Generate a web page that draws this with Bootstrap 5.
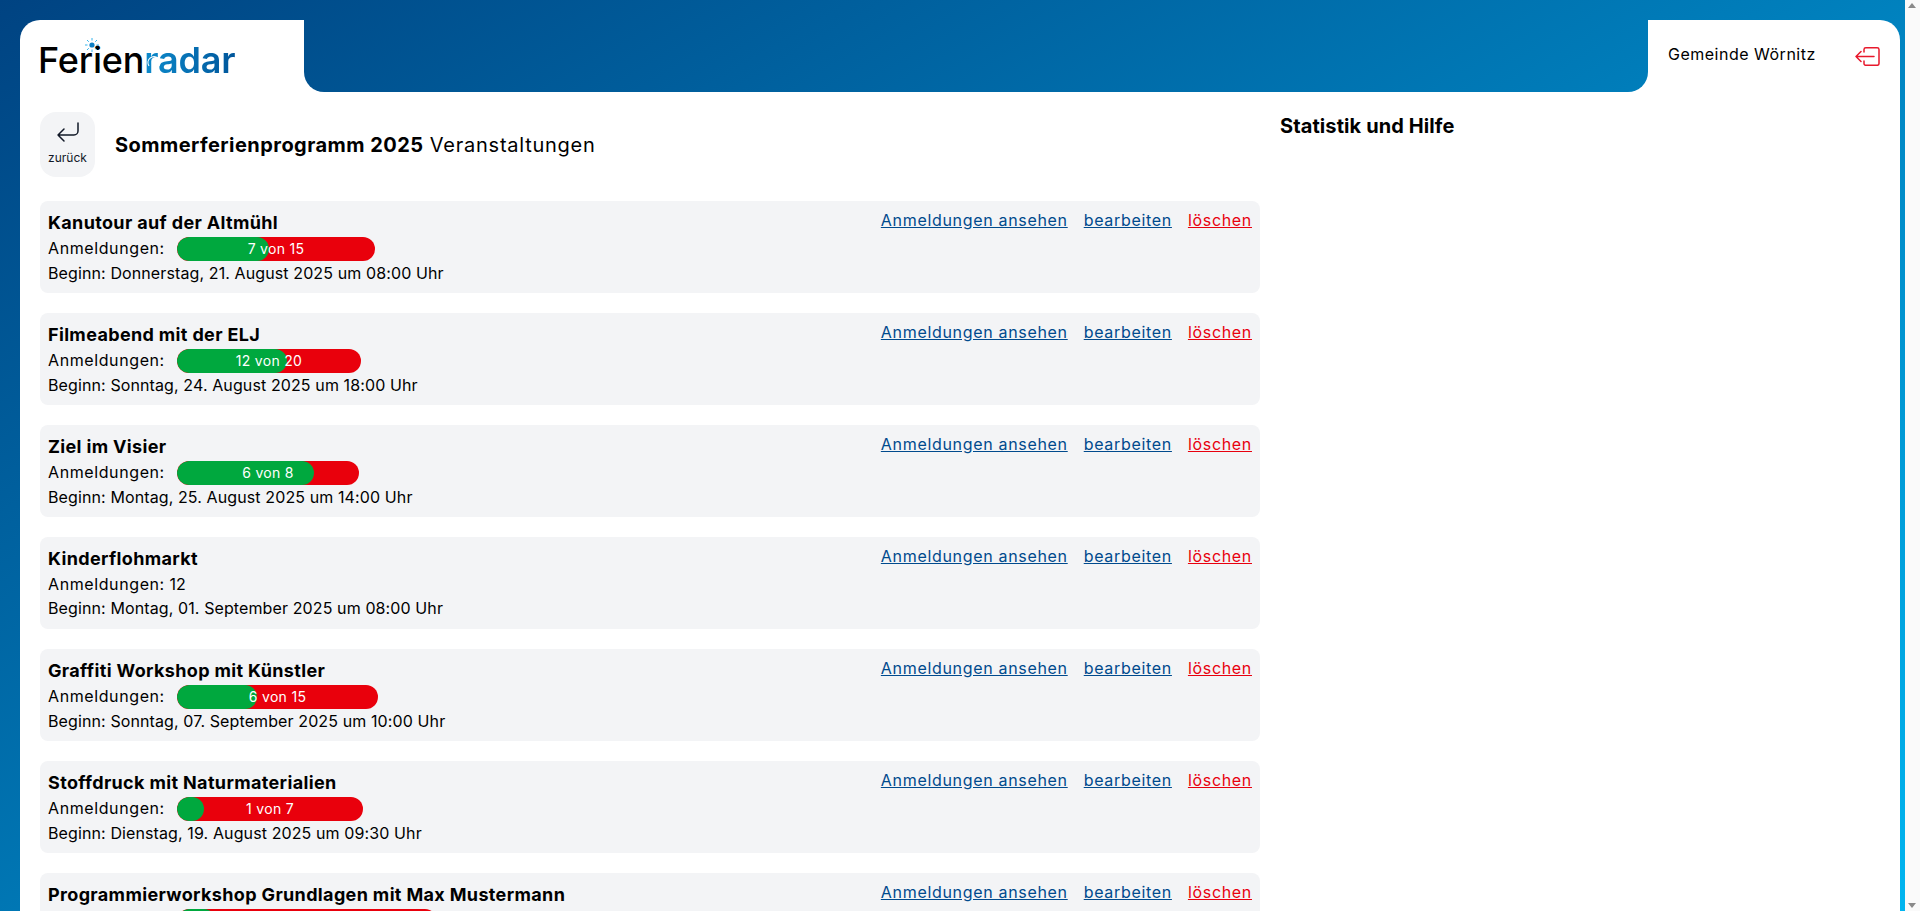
<!DOCTYPE html>
<html lang="de">
<head>
<meta charset="utf-8">
<title>Ferienradar</title>
<link href="https://cdn.jsdelivr.net/npm/bootstrap@5.3.0/dist/css/bootstrap.min.css" rel="stylesheet">
<style>
body{font-family:Inter,"Noto Sans",sans-serif;font-size:16px;color:#000;background:linear-gradient(150deg,#004382 0%,#00b5f0 100%) fixed;padding:20px 20px 20px 20px}
.fr-panel{background:#fff;border-radius:20px;min-height:1100px}
.fr-tab-left{width:284px;height:72px;padding:22px 0 0 18px}
.fr-tab-right{width:252px;height:72px;padding:0 20px}
.fr-strip{height:72px;background:linear-gradient(150deg,#004382 0%,#00b5f0 100%) fixed;border-radius:0 0 20px 20px}
.fr-logo{font-size:36px;font-weight:500;line-height:1;letter-spacing:-.005em;width:max-content}
.fr-radar{background:linear-gradient(90deg,#0d8bcc,#00569b);-webkit-background-clip:text;background-clip:text;color:transparent;font-weight:600}
.fr-sun{position:absolute;left:47px;top:-4px;width:14px;height:14px}
.fr-dial{position:absolute;left:108px;top:13px;width:16px;height:16px}
.fr-name{font-size:16px;letter-spacing:.5px;line-height:18px;margin-top:25px}
.fr-exit{margin-top:27px;line-height:0}
.fr-main{padding:20px 20px 20px}
.fr-main .row{--bs-gutter-x:20px}
.fr-back{width:55px;height:65px;background:#f3f4f6;border-radius:16px;color:#111827;font-size:12px;text-decoration:none;padding-top:8px}
.fr-back span{margin-top:5px}
.fr-head{font-size:20px;margin:0 0 0 20px;font-weight:400;letter-spacing:.75px}
.fr-head b{font-weight:700;letter-spacing:.45px}
.fr-side{font-size:20px;font-weight:700;margin:0;padding-top:1px;line-height:27px;letter-spacing:.1px}
.fr-top{margin-bottom:24px}
.fr-item{background:#f3f4f6;border-radius:8px;padding:8px;margin-bottom:20px;height:92px}
.fr-title{font-size:18px;font-weight:700;line-height:27px;letter-spacing:.35px}
.fr-line{line-height:24px;letter-spacing:.11px}
.fr-lbl{width:129px;letter-spacing:.6px}
.fr-bar{position:relative;height:24px;background:#e9000c;border-radius:12px;color:#fff;font-size:14px;text-align:center;margin-top:1px;line-height:24px;overflow:hidden;letter-spacing:.3px}
.fr-fill{position:absolute;left:0;top:0;bottom:0;background:#00a83e;border-radius:12px}
.fr-count{position:relative}
.fr-links{gap:16px;letter-spacing:.68px;margin-top:-1px}
.fr-links a{color:#004a8d}
.fr-links a.fr-del{color:#e8000e}
.fr-scroll{position:fixed;top:0;right:0;bottom:0;width:15px;background:#fafafa}
.fr-up,.fr-down{position:absolute;left:3px;width:0;height:0;border-left:4.5px solid transparent;border-right:4.5px solid transparent}
.fr-up{top:3px;border-bottom:5px solid #8a8a8a}
.fr-down{bottom:3px;border-top:5px solid #8a8a8a}
</style>
</head>
<body>
<div class="fr-panel">
  <header class="d-flex">
    <div class="fr-tab-left">
      <div class="fr-logo position-relative">Ferien<span class="fr-radar">radar</span>
        <svg class="fr-sun" viewBox="0 0 14 14" fill="none" stroke="#35b4ec" stroke-width="1"><circle cx="7" cy="7" r="2.6" fill="#0c7fc4" stroke="none"/><path d="M7 0v2.5M7 11.5V14M0 7h2.5M11.5 7H14M2 2l1.8 1.8M10.2 10.2L12 12M12 2l-1.8 1.8M3.8 10.2L2 12"/></svg>
        <svg class="fr-dial" viewBox="0 0 16 16" fill="none" stroke="#fff" stroke-width="1.2"><path d="M3 11a6 6 0 1 1 10 0"/><circle cx="8" cy="8" r="1.6"/><path d="M9 7l3-3"/></svg>
      </div>
    </div>
    <div class="fr-strip flex-grow-1"></div>
    <div class="fr-tab-right d-flex align-items-start justify-content-between">
      <span class="fr-name">Gemeinde Wörnitz</span>
      <a href="#" class="fr-exit" aria-label="abmelden">
        <svg width="25" height="19" viewBox="0 0 25 19" fill="none" stroke="#e8192c" stroke-width="1.5" stroke-linecap="round" stroke-linejoin="round"><path d="M9 5V2.5A1.8 1.8 0 0 1 10.8.8H22.2A1.8 1.8 0 0 1 24 2.5V16.5a1.8 1.8 0 0 1-1.8 1.8H10.8A1.8 1.8 0 0 1 9 16.5V14M1 9.5H19M6 4.5L1 9.5L6 14.5"/></svg>
      </a>
    </div>
  </header>
  <main class="fr-main">
    <div class="row">
      <div class="col-8">
        <div class="d-flex align-items-center fr-top">
          <a href="#" class="fr-back d-flex flex-column align-items-center">
            <svg width="24" height="24" viewBox="0 0 24 24" fill="none" stroke="currentColor" stroke-width="1.5" stroke-linecap="round" stroke-linejoin="round"><path d="M22 3v8a4 4 0 0 1-4 4H2M2 15l6-6M2 15l6 6"/></svg>
            <span>zurück</span>
          </a>
          <h1 class="fr-head"><b>Sommerferienprogramm 2025</b> Veranstaltungen</h1>
        </div>

        <div class="fr-item d-flex justify-content-between">
          <div><div class="fr-title">Kanutour auf der Altmühl</div>
          <div class="d-flex fr-line"><span class="fr-lbl">Anmeldungen:</span><div class="fr-bar" style="width:198px"><div class="fr-fill" style="width:46.67%"></div><span class="fr-count">7 von 15</span></div></div>
          <div class="fr-line">Beginn: Donnerstag, 21. August 2025 um 08:00 Uhr</div></div>
          <div class="d-flex fr-links align-items-start"><a href="#">Anmeldungen ansehen</a><a href="#">bearbeiten</a><a href="#" class="fr-del">löschen</a></div>
        </div>

        <div class="fr-item d-flex justify-content-between">
          <div><div class="fr-title">Filmeabend mit der ELJ</div>
          <div class="d-flex fr-line"><span class="fr-lbl">Anmeldungen:</span><div class="fr-bar" style="width:184px"><div class="fr-fill" style="width:60%"></div><span class="fr-count">12 von 20</span></div></div>
          <div class="fr-line">Beginn: Sonntag, 24. August 2025 um 18:00 Uhr</div></div>
          <div class="d-flex fr-links align-items-start"><a href="#">Anmeldungen ansehen</a><a href="#">bearbeiten</a><a href="#" class="fr-del">löschen</a></div>
        </div>

        <div class="fr-item d-flex justify-content-between">
          <div><div class="fr-title">Ziel im Visier</div>
          <div class="d-flex fr-line"><span class="fr-lbl">Anmeldungen:</span><div class="fr-bar" style="width:182px"><div class="fr-fill" style="width:75%"></div><span class="fr-count">6 von 8</span></div></div>
          <div class="fr-line">Beginn: Montag, 25. August 2025 um 14:00 Uhr</div></div>
          <div class="d-flex fr-links align-items-start"><a href="#">Anmeldungen ansehen</a><a href="#">bearbeiten</a><a href="#" class="fr-del">löschen</a></div>
        </div>

        <div class="fr-item d-flex justify-content-between">
          <div><div class="fr-title">Kinderflohmarkt</div>
          <div class="fr-line"><span class="fr-lbl">Anmeldungen:</span> 12</div>
          <div class="fr-line">Beginn: Montag, 01. September 2025 um 08:00 Uhr</div></div>
          <div class="d-flex fr-links align-items-start"><a href="#">Anmeldungen ansehen</a><a href="#">bearbeiten</a><a href="#" class="fr-del">löschen</a></div>
        </div>

        <div class="fr-item d-flex justify-content-between">
          <div><div class="fr-title">Graffiti Workshop mit Künstler</div>
          <div class="d-flex fr-line"><span class="fr-lbl">Anmeldungen:</span><div class="fr-bar" style="width:201px"><div class="fr-fill" style="width:40%"></div><span class="fr-count">6 von 15</span></div></div>
          <div class="fr-line">Beginn: Sonntag, 07. September 2025 um 10:00 Uhr</div></div>
          <div class="d-flex fr-links align-items-start"><a href="#">Anmeldungen ansehen</a><a href="#">bearbeiten</a><a href="#" class="fr-del">löschen</a></div>
        </div>

        <div class="fr-item d-flex justify-content-between">
          <div><div class="fr-title">Stoffdruck mit Naturmaterialien</div>
          <div class="d-flex fr-line"><span class="fr-lbl">Anmeldungen:</span><div class="fr-bar" style="width:186px"><div class="fr-fill" style="width:14.29%"></div><span class="fr-count">1 von 7</span></div></div>
          <div class="fr-line">Beginn: Dienstag, 19. August 2025 um 09:30 Uhr</div></div>
          <div class="d-flex fr-links align-items-start"><a href="#">Anmeldungen ansehen</a><a href="#">bearbeiten</a><a href="#" class="fr-del">löschen</a></div>
        </div>

        <div class="fr-item d-flex justify-content-between">
          <div><div class="fr-title">Programmierworkshop Grundlagen mit Max Mustermann</div>
          <div class="d-flex fr-line"><span class="fr-lbl">Anmeldungen:</span><div class="fr-bar" style="width:260px"><div class="fr-fill" style="width:15%"></div></div></div></div>
          <div class="d-flex fr-links align-items-start"><a href="#">Anmeldungen ansehen</a><a href="#">bearbeiten</a><a href="#" class="fr-del">löschen</a></div>
        </div>
      </div>
      <div class="col-4">
        <h2 class="fr-side">Statistik und Hilfe</h2>
      </div>
    </div>
  </main>
</div>
<div class="fr-scroll"><span class="fr-up"></span><span class="fr-down"></span></div>
<script src="https://cdn.jsdelivr.net/npm/bootstrap@5.3.0/dist/js/bootstrap.bundle.min.js"></script>
</body>
</html>
